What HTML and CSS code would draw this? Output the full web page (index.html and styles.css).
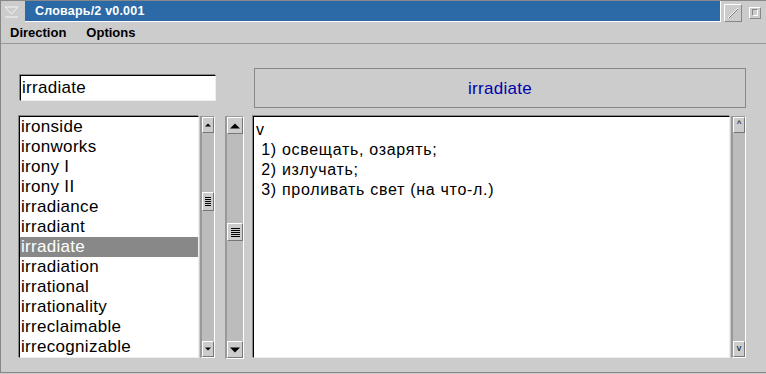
FILE: index.html
```html
<!DOCTYPE html>
<html lang="ru">
<head>
    <meta charset="UTF-8">
    <title>Словарь/2 v0.001</title>
    <link rel="stylesheet" href="styles.css">
</head>
<body>

<div class="window">
    <div class="titlebar">
        <div class="sys-btn">
            <svg width="22" height="22" viewBox="0 0 22 22">
                <polyline points="4,7 17,7 10.5,14 4,7" fill="none" stroke="#f4f4f4" stroke-width="1"/>
                <line x1="4" y1="17" x2="17" y2="17" stroke="#f4f4f4" stroke-width="1"/>
            </svg>
        </div>
        <div class="title">Словарь/2 v0.001</div>
        <div class="win-btns">
            <div class="max-btn">
                <svg width="16" height="16" viewBox="0 0 16 16">
                    <line x1="3" y1="13" x2="13" y2="3" stroke="#fff" stroke-width="1"/>
                    <line x1="4" y1="13" x2="13" y2="4" stroke="#777" stroke-width="1"/>
                </svg>
            </div>
            <div class="min-btn"><span></span></div>
        </div>
    </div>

    <div class="menubar">
        <span class="menu-item">Direction</span>
        <span class="menu-item">Options</span>
    </div>

    <div class="main">
        <div class="search-cell">
            <input class="search" type="text" value="irradiate">
        </div>
        <div class="word-header">irradiate</div>

        <div class="list-box">
            <ul class="words">
                <li>ironside</li>
                <li>ironworks</li>
                <li>irony I</li>
                <li>irony II</li>
                <li>irradiance</li>
                <li>irradiant</li>
                <li class="selected">irradiate</li>
                <li>irradiation</li>
                <li>irrational</li>
                <li>irrationality</li>
                <li>irreclaimable</li>
                <li>irrecognizable</li>
            </ul>
            <div class="vscroll small">
                <div class="arrow up"></div>
                <div class="trough"><div class="thumb" style="margin-top: 59px"></div></div>
                <div class="arrow down"></div>
            </div>
        </div>

        <div class="vscroll big">
            <div class="arrow up"></div>
            <div class="trough"><div class="thumb" style="margin-top: 89px"></div></div>
            <div class="arrow down"></div>
        </div>

        <div class="text-box">
            <div class="article">v
 1) освещать, озарять;
 2) излучать;
 3) проливать свет (на что-л.)</div>
            <div class="vscroll thin">
                <div class="arrow up chev">^</div>
                <div class="trough"></div>
                <div class="arrow down chev">v</div>
            </div>
        </div>
    </div>
</div>

</body>
</html>
```

FILE: styles.css
```css
body {
    margin: 0;
    background: #cccccc;
    font-family: "Liberation Sans", Arial, sans-serif;
    width: 766px;
    height: 374px;
    overflow: hidden;
}
.window {
    height: 373px;
    box-sizing: border-box;
    border-left: 1px solid #888;
    border-top: 1px solid #888;
    border-bottom: 1px solid #888;
}
.titlebar {
    display: flex;
    height: 21px;
}
.sys-btn {
    width: 24px;
    height: 21px;
    margin-top: -1px;
}
.title {
    flex: 1;
    background: #2b6aa6;
    color: #fff;
    font-weight: bold;
    font-size: 12.5px;
    letter-spacing: 0.2px;
    line-height: 20px;
    padding-left: 10px;
    border-right: 1px solid #fff;
    border-bottom: 1px solid #fff;
    height: 20px;
}
.win-btns {
    display: flex;
    align-items: center;
    width: 45px;
}
.max-btn {
    width: 16px;
    height: 16px;
    margin-left: 3px;
    border: 1px solid;
    border-color: #fff #888 #888 #fff;
    margin-top: 2px;
}
.min-btn {
    width: 10px;
    height: 10px;
    margin-left: 7px;
    margin-top: 2px;
    border: 1px solid;
    border-color: #fff #888 #888 #fff;
    display: flex;
    align-items: center;
    justify-content: center;
}
.min-btn span {
    width: 4px;
    height: 5px;
    border: 1px solid;
    border-color: #888 #fff #fff #888;
}
.menubar {
    height: 21px;
    display: flex;
    gap: 20px;
    padding-left: 9px;
    font-size: 13px;
    font-weight: bold;
    line-height: 21px;
    border-bottom: 1px solid #999;
}
.main {
    display: grid;
    grid-template-columns: 196px 18px 493px;
    grid-template-rows: 40px 242px;
    column-gap: 10px;
    row-gap: 8px;
    padding: 24px 0 0 18px;
}
.search-cell {
    display: flex;
    align-items: center;
}
.search {
    width: 196px;
    height: 26px;
    margin-left: 1px;
    box-sizing: border-box;
    border: 1px solid;
    border-color: #000 #eee #eee #000;
    box-shadow: -1px -1px 0 #888;
    background: #fff;
    font-family: "Liberation Sans", Arial, sans-serif;
    font-size: 17px;
    letter-spacing: 0.3px;
    padding: 0 1px;
    outline: none;
}
.word-header {
    grid-column: 3;
    margin-left: 1px;
    border: 1px solid #888;
    display: flex;
    align-items: center;
    justify-content: center;
    color: #0000aa;
    font-size: 17px;
    letter-spacing: 0.3px;
    padding-top: 1px;
}
.list-box {
    display: flex;
    grid-column: 1;
    grid-row: 2;
}
.words {
    list-style: none;
    margin: 0;
    padding: 0;
    width: 178px;
    height: 240px;
    background: #fff;
    border: 1px solid;
    border-color: #000 #eee #eee #000;
    box-shadow: -1px -1px 0 #888;
    overflow: hidden;
}
.words li {
    height: 20px;
    line-height: 20px;
    font-size: 17px;
    letter-spacing: 0.3px;
    padding-left: 1px;
}
.words li.selected {
    background: #888;
    color: #fff;
}
.vscroll {
    display: flex;
    flex-direction: column;
    background: #bcbcbc;
    border-left: 2px solid #999;
    border-right: 1px solid #fff;
    border-top: 1px solid #999;
    border-bottom: 1px solid #fff;
    box-sizing: border-box;
}
.vscroll.small {
    width: 15px;
    height: 242px;
    margin-left: 1px;
}
.vscroll.big {
    grid-column: 2;
    grid-row: 2;
    width: 19px;
    height: 243px;
}
.vscroll.thin {
    width: 15px;
    height: 242px;
    margin-left: 1px;
}
.trough {
    flex: 1;
}
.arrow {
    height: 16px;
    background: #cccccc;
    border: 1px solid;
    border-color: #fff #777 #777 #fff;
    box-sizing: border-box;
    position: relative;
}
.big .arrow {
    height: 17px;
}
.arrow.up::after,
.arrow.down::after {
    content: "";
    position: absolute;
    left: 50%;
    top: 50%;
    width: 0;
    height: 0;
    border-left: 4px solid transparent;
    border-right: 4px solid transparent;
    transform: translate(-50%, -50%);
}
.arrow.up::after {
    border-bottom: 4px solid #000;
}
.arrow.down::after {
    border-top: 4px solid #000;
}
.small .arrow.up::after,
.small .arrow.down::after {
    border-left-width: 3px;
    border-right-width: 3px;
}
.small .arrow.up::after {
    border-bottom-width: 3px;
}
.small .arrow.down::after {
    border-top-width: 3px;
}
.big .arrow.up::after,
.big .arrow.down::after {
    border-left-width: 5px;
    border-right-width: 5px;
}
.big .arrow.up::after {
    border-bottom-width: 5px;
}
.big .arrow.down::after {
    border-top-width: 5px;
}
.arrow.chev {
    font-size: 9px;
    line-height: 13px;
    text-align: center;
    color: #000;
}
.arrow.chev::after {
    display: none;
}
.thumb {
    height: 19px;
    background: #cccccc;
    border: 1px solid;
    border-color: #fff #777 #777 #fff;
    box-sizing: border-box;
    background-image: repeating-linear-gradient(to bottom, #000 0 1px, transparent 1px 2px);
    background-size: 6px 9px;
    background-position: center;
    background-repeat: no-repeat;
}
.big .thumb {
    height: 18px;
    background-size: 9px 9px;
}
.text-box {
    display: flex;
    grid-column: 3;
    grid-row: 2;
}
.article {
    width: 477px;
    background: #fff;
    border: 1px solid;
    border-color: #000 #eee #eee #000;
    box-shadow: -1px -1px 0 #888;
    font-size: 16px;
    letter-spacing: 0.7px;
    line-height: 20px;
    padding: 3px 2px;
    box-sizing: border-box;
    height: 242px;
    white-space: pre;
}
```
